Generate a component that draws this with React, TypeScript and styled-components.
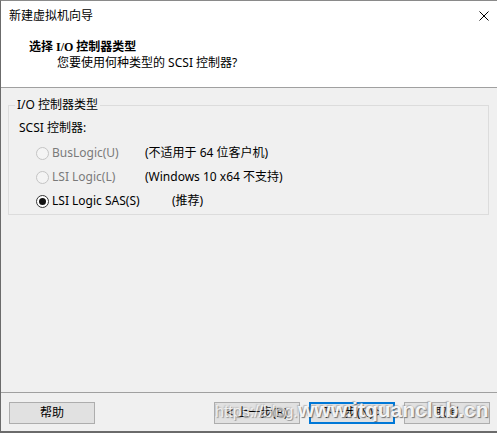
import React from "react";
import styled, { createGlobalStyle } from "styled-components";

const GlobalStyle = createGlobalStyle`
  html, body {
    margin: 0;
    padding: 0;
    background: #f0f0f0;
  }
  body {
    font-family: "Noto Sans", "Noto Sans CJK SC", sans-serif;
    font-size: 12px;
    color: #000;
  }
  * {
    box-sizing: border-box;
  }
`;

const Window = styled.div`
  width: 497px;
  height: 433px;
  display: flex;
  flex-direction: column;
  border-top: 1px solid #8a8a8a;
  border-left: 1px solid #6b6b6b;
  border-bottom: 2px solid #6b6b6b;
  background: #f0f0f0;
  overflow: hidden;
`;

const TitleBar = styled.div`
  height: 29px;
  flex: none;
  display: flex;
  align-items: center;
  justify-content: space-between;
  padding: 0 8px;
  background: #fff;
  line-height: 16px;
`;

const Header = styled.div`
  height: 58px;
  flex: none;
  background: #fff;
  border-bottom: 1px solid #a0a0a0;
  padding: 9px 0 0 28px;
`;

const Heading = styled.div`
  font-family: "Liberation Serif", "Noto Sans CJK SC", serif;
  font-weight: bold;
  line-height: 16px;
`;

const SubHeading = styled.div`
  padding-left: 28px;
  line-height: 16px;
`;

const Body = styled.div`
  flex: 1;
  padding: 9px 8px 0 7px;
`;

const Group = styled.fieldset`
  margin: 0;
  padding: 0 0 1px 10px;
  min-width: 0;
  border: 1px solid #dcdcdc;
`;

const Legend = styled.legend`
  padding: 0 2px;
  margin-left: -4px;
  line-height: 16px;
`;

const GroupLabel = styled.div`
  margin: 7px 0 5px;
  line-height: 16px;
`;

const OptionRow = styled.div`
  height: 24px;
  display: flex;
  align-items: center;
  padding-left: 17px;
  line-height: 16px;
`;

const OptionLabel = styled.label<{ $width: number; $disabled?: boolean }>`
  width: ${(p) => p.$width}px;
  display: flex;
  align-items: center;
  gap: 3px;
  color: ${(p) => (p.$disabled ? "#7a7a7a" : "#000")};
`;

const RadioMark = styled.span<{ $checked?: boolean; $disabled?: boolean }>`
  width: 13px;
  height: 13px;
  flex: none;
  border-radius: 50%;
  border: 1px solid ${(p) => (p.$disabled ? "#c4c4c4" : "#333")};
  background: ${(p) => (p.$disabled ? "#f4f4f4" : "#fff")};
  display: flex;
  align-items: center;
  justify-content: center;
  &::after {
    content: "";
    width: 7px;
    height: 7px;
    border-radius: 50%;
    background: #111;
    display: ${(p) => (p.$checked ? "block" : "none")};
  }
`;

const Footer = styled.div`
  height: 39px;
  flex: none;
  position: relative;
  display: flex;
  gap: 9px;
  border-top: 1px solid #a0a0a0;
  padding: 9px 7px 0 8px;
`;

const Spacer = styled.div`
  flex: 1;
`;

const Button = styled.button<{ $default?: boolean }>`
  width: 86px;
  height: 22px;
  margin: 0;
  padding: 0;
  background: #e1e1e1;
  border: ${(p) => (p.$default ? "2px solid #0078d7" : "1px solid #adadad")};
  font: inherit;
  color: #000;
  line-height: 16px;
`;

/* the site watermark stamped over the button row */
const Watermark = styled.div`
  position: absolute;
  left: 214px;
  top: 5px;
  display: flex;
  align-items: baseline;
  white-space: nowrap;
  pointer-events: none;
  font-family: "Liberation Sans", Arial, sans-serif;
  color: rgba(255, 255, 255, 0.92);
  text-shadow: 1px 1px 1px rgba(70, 70, 70, 0.7), -1px -1px 1px rgba(140, 140, 140, 0.5);
`;

const WatermarkFaint = styled.span`
  width: 83px;
  overflow: hidden;
  font-size: 16px;
  opacity: 0.7;
`;

const WatermarkStrong = styled.span`
  font-size: 21px;
  font-weight: bold;
`;

const options = [
  { label: "BusLogic(U)", note: "(不适用于 64 位客户机)", width: 109, disabled: true },
  { label: "LSI Logic(L)", note: "(Windows 10 x64 不支持)", width: 109, disabled: true },
  { label: "LSI Logic SAS(S)", note: "(推荐)", width: 136, checked: true },
];

export default function App() {
  return (
    <>
      <GlobalStyle />
      <Window>
        <TitleBar>
          <span>新建虚拟机向导</span>
          <svg width="10" height="10" viewBox="0 0 10 10">
            <path d="M0.5 0.5 L9.5 9.5 M9.5 0.5 L0.5 9.5" stroke="#000" strokeWidth="1" />
          </svg>
        </TitleBar>
        <Header>
          <Heading>选择 I/O 控制器类型</Heading>
          <SubHeading>您要使用何种类型的 SCSI 控制器?</SubHeading>
        </Header>
        <Body>
          <Group>
            <Legend>I/O 控制器类型</Legend>
            <GroupLabel>SCSI 控制器:</GroupLabel>
            {options.map((o) => (
              <OptionRow key={o.label}>
                <OptionLabel $width={o.width} $disabled={o.disabled}>
                  <RadioMark $checked={o.checked} $disabled={o.disabled} />
                  {o.label}
                </OptionLabel>
                <span>{o.note}</span>
              </OptionRow>
            ))}
          </Group>
        </Body>
        <Footer>
          <Button>帮助</Button>
          <Spacer />
          <Button>&lt; 上一步(B)</Button>
          <Button $default>下一步(N) &gt;</Button>
          <Button>取消</Button>
          <Watermark>
            <WatermarkFaint>https://blog.csdn.net</WatermarkFaint>
            <WatermarkStrong>www.itquanclub.cn</WatermarkStrong>
          </Watermark>
        </Footer>
      </Window>
    </>
  );
}
